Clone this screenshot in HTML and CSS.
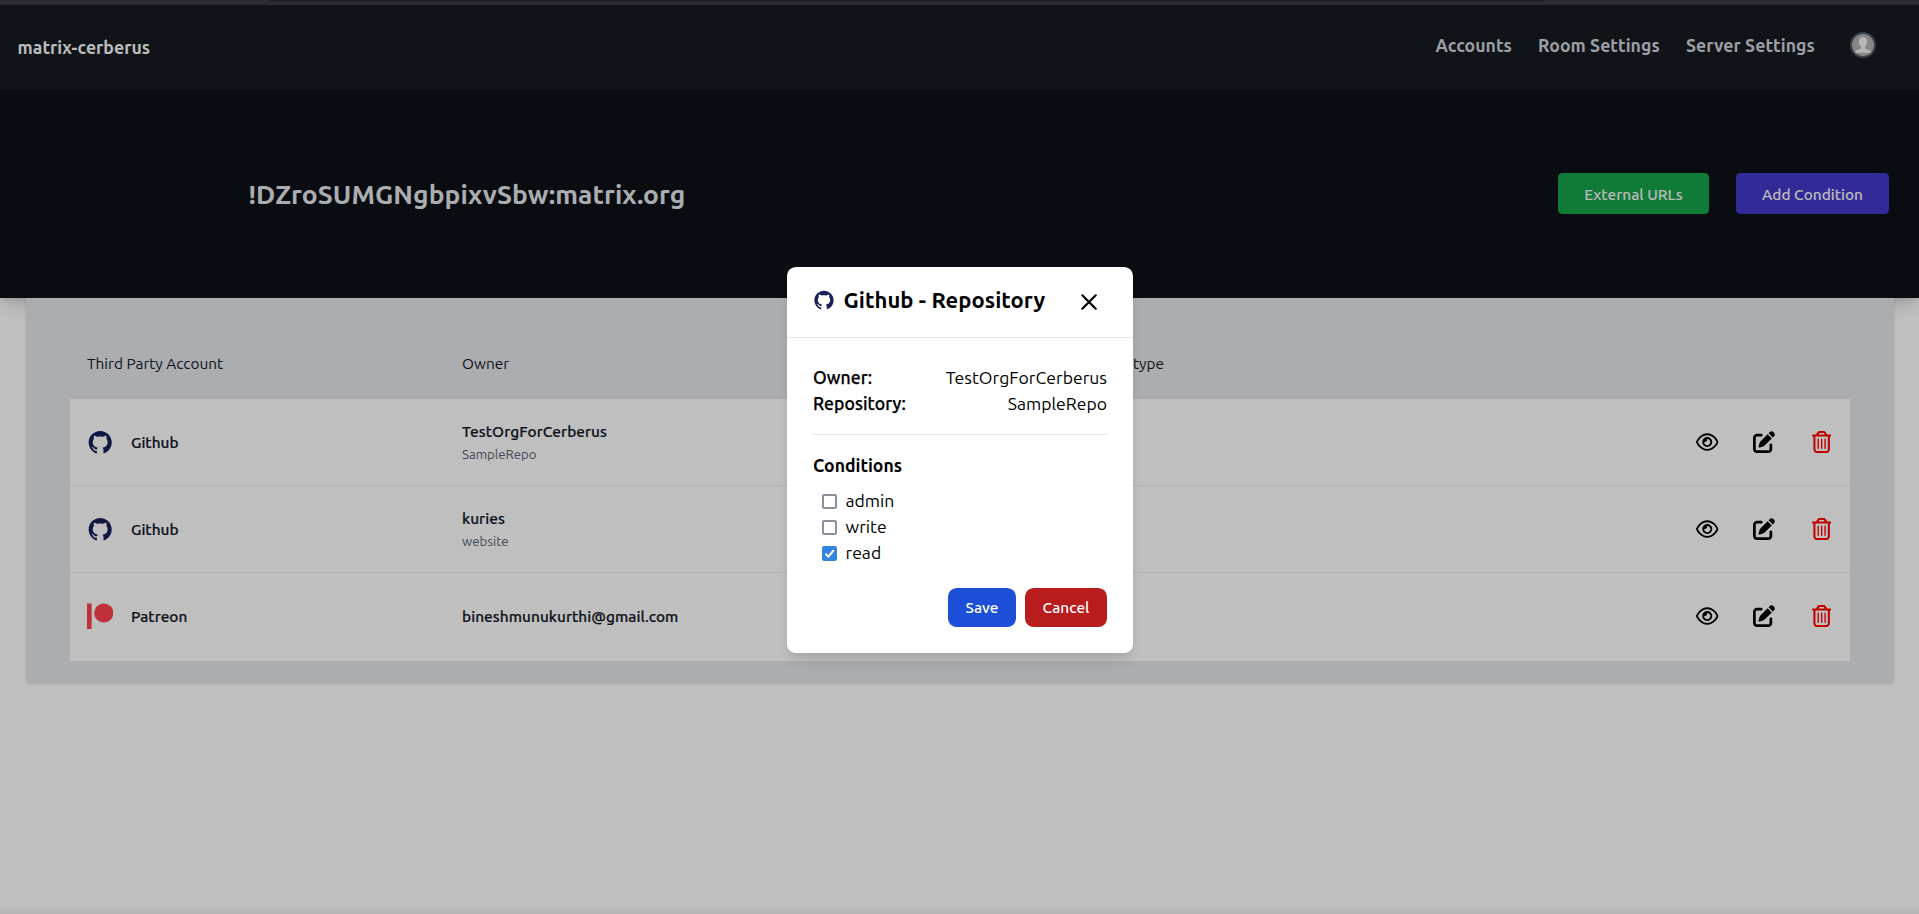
FILE: index.html
```html
<!DOCTYPE html>
<html lang="en">
<head>
<meta charset="utf-8">
<title>matrix-cerberus</title>
<link rel="stylesheet" href="styles.css">
</head>
<body>
<svg class="sprite" aria-hidden="true">
  <symbol id="github" viewBox="0 0 1024 1024"><path d="M511.6 76.3C264.3 76.2 64 276.4 64 523.5 64 718.9 189.3 885 363.8 946c23.5 5.9 19.9-10.8 19.9-22.2v-77.5c-135.7 15.9-141.2-73.9-150.3-88.9C215 726 171.5 718 184.5 703c30.9-15.9 62.4 4 98.9 57.9 26.4 39.1 77.9 32.5 104 26 5.7-23.5 17.9-44.5 34.7-60.8-140.6-25.2-199.2-111-199.2-213 0-49.5 16.3-95 48.3-131.7-20.4-60.5 1.9-112.3 4.9-120 58.1-5.2 118.5 41.6 123.2 45.3 33-8.9 70.7-13.6 112.9-13.6 42.4 0 80.2 4.9 113.5 13.9 11.3-8.6 67.3-48.8 121.3-43.9 2.9 7.7 24.7 58.3 5.5 118 32.4 36.8 48.9 82.7 48.9 132.3 0 102.2-59 188.1-200 212.9a127.5 127.5 0 0138.1 91v112.5c.8 9 0 17.9 15 17.9 177.1-59.7 304.6-227 304.6-424.1 0-247.2-200.4-447.3-447.5-447.3z"/></symbol>
  <symbol id="patreon" viewBox="0 0 512 512"><path d="M0 8h90v496H0z"/><circle cx="326" cy="194" r="186"/></symbol>
  <symbol id="eye" viewBox="0 0 576 512"><path d="M288 80c-65.2 0-118.8 29.6-159.9 67.7C89.6 183.5 63 226 49.4 256c13.6 30 40.2 72.5 78.6 108.3C169.2 402.4 222.8 432 288 432s118.8-29.6 159.9-67.7C486.4 328.5 513 286 526.6 256c-13.6-30-40.2-72.5-78.6-108.3C406.8 109.6 353.2 80 288 80zM95.4 112.6C142.5 68.8 207.2 32 288 32s145.5 36.8 192.6 80.6c46.8 43.5 78.1 95.4 93 131.1c3.3 7.9 3.3 16.7 0 24.6c-14.9 35.7-46.2 87.7-93 131.1C433.5 443.2 368.8 480 288 480s-145.5-36.8-192.6-80.6C48.6 356 17.3 304 2.5 268.3c-3.3-7.9-3.3-16.7 0-24.6C17.3 208 48.6 156 95.4 112.6zM288 336c44.2 0 80-35.8 80-80s-35.8-80-80-80c-.7 0-1.3 0-2 0c1.3 5.1 2 10.5 2 16c0 35.3-28.7 64-64 64c-5.5 0-10.9-.7-16-2c0 .7 0 1.3 0 2c0 44.2 35.8 80 80 80zm0-208a128 128 0 1 1 0 256 128 128 0 1 1 0-256z"/></symbol>
  <symbol id="edit" viewBox="0 0 512 512"><path d="M471.6 21.7c-21.9-21.9-57.3-21.9-79.2 0L362.3 51.7l97.9 97.9 30.1-30.1c21.9-21.9 21.9-57.3 0-79.2L471.6 21.7zm-299.2 220c-6.1 6.1-10.8 13.6-13.5 21.9l-29.6 88.8c-2.9 8.6-.6 18.1 5.8 24.6s15.9 8.7 24.6 5.8l88.8-29.6c8.2-2.7 15.7-7.4 21.9-13.5L437.7 172.3 339.7 74.3 172.4 241.7zM96 64C43 64 0 107 0 160V416c0 53 43 96 96 96H352c53 0 96-43 96-96V320c0-17.7-14.3-32-32-32s-32 14.3-32 32v96c0 17.7-14.3 32-32 32H96c-17.7 0-32-14.3-32-32V160c0-17.7 14.3-32 32-32h96c17.7 0 32-14.3 32-32s-14.3-32-32-32H96z"/></symbol>
  <symbol id="trash" viewBox="0 0 448 512"><path d="M170.5 51.6L151.5 80h145l-19-28.4c-1.5-2.2-4-3.6-6.7-3.6H177.1c-2.7 0-5.2 1.3-6.7 3.6zm147-26.6L354.2 80H368h48 8c13.3 0 24 10.7 24 24s-10.7 24-24 24h-8V432c0 44.2-35.8 80-80 80H112c-44.2 0-80-35.8-80-80V128H24c-13.3 0-24-10.7-24-24S10.7 80 24 80h8H80 93.8l36.7-55.1C140.9 9.4 158.4 0 177.1 0h93.7c18.7 0 36.2 9.4 46.6 24.9zM80 128V432c0 17.7 14.3 32 32 32H336c17.7 0 32-14.3 32-32V128H80zm80 64V400c0 8.8-7.2 16-16 16s-16-7.2-16-16V192c0-8.8 7.2-16 16-16s16 7.2 16 16zm80 0V400c0 8.8-7.2 16-16 16s-16-7.2-16-16V192c0-8.8 7.2-16 16-16s16 7.2 16 16zm80 0V400c0 8.8-7.2 16-16 16s-16-7.2-16-16V192c0-8.8 7.2-16 16-16s16 7.2 16 16z"/></symbol>
</svg>

<div class="chrome"><div class="chrome-field"></div></div>

<nav class="nav">
  <span class="brand">matrix-cerberus</span>
  <div class="links">
    <span class="link link-accounts">Accounts</span>
    <span class="link link-room">Room Settings</span>
    <span class="link link-server">Server Settings</span>
    <svg class="avatar" viewBox="0 0 26 26"><circle cx="13" cy="13" r="12" fill="#b3b3b3" stroke="#4b5563" stroke-width="2"/><path d="M13 5c2.500 0 4.100 1.700 4.100 4.300 0 2.300-.9 4.400-2.100 5.400v1.500c.3 1.300 5.600 1.200 6.200 4.500H4.800c.6-3.300 5.900-3.200 6.200-4.500v-1.500c-1.200-1-2.100-3.100-2.100-5.400C8.900 6.700 10.500 5 13 5z" fill="#f3f3f3"/></svg>
  </div>
</nav>

<header class="hero">
  <h1 class="room">!DZroSUMGNgbpixvSbw:matrix.org</h1>
  <div class="hero-actions">
    <button class="btn btn-green">External URLs</button>
    <button class="btn btn-indigo">Add Condition</button>
  </div>
</header>

<main class="card">
  <div class="row head">
    <span>Third Party Account</span><span>Owner</span><span>type</span>
  </div>
  <div class="body">
    <div class="row item">
      <div class="account"><svg class="logo navy"><use href="#github"/></svg><span class="provider">Github</span></div>
      <div class="owner"><span class="name">TestOrgForCerberus</span><span class="sub">SampleRepo</span></div>
      <div></div>
      <div class="actions"><svg class="eye"><use href="#eye"/></svg><svg class="edit"><use href="#edit"/></svg><svg class="trash"><use href="#trash"/></svg></div>
    </div>
    <div class="row item">
      <div class="account"><svg class="logo navy"><use href="#github"/></svg><span class="provider">Github</span></div>
      <div class="owner"><span class="name">kuries</span><span class="sub">website</span></div>
      <div></div>
      <div class="actions"><svg class="eye"><use href="#eye"/></svg><svg class="edit"><use href="#edit"/></svg><svg class="trash"><use href="#trash"/></svg></div>
    </div>
    <div class="row item">
      <div class="account"><svg class="logo coral"><use href="#patreon"/></svg><span class="provider">Patreon</span></div>
      <div class="owner"><span class="name">bineshmunukurthi@gmail.com</span></div>
      <div></div>
      <div class="actions"><svg class="eye"><use href="#eye"/></svg><svg class="edit"><use href="#edit"/></svg><svg class="trash"><use href="#trash"/></svg></div>
    </div>
  </div>
</main>

<div class="overlay">
  <section class="modal">
    <div class="modal-head">
      <svg class="modal-logo navy"><use href="#github"/></svg>
      <h2 class="modal-title">Github - Repository</h2>
      <svg class="close" viewBox="0 0 16 16"><path d="M1.300 1.300l13.400 13.400M14.700 1.300L1.300 14.700"/></svg>
    </div>
    <div class="modal-body">
      <div class="pair"><span class="key">Owner:</span><span>TestOrgForCerberus</span></div>
      <div class="pair"><span class="key">Repository:</span><span>SampleRepo</span></div>
      <hr class="rule">
      <h3 class="cond">Conditions</h3>
      <div class="check"><span class="box"></span><span>admin</span></div>
      <div class="check"><span class="box"></span><span>write</span></div>
      <div class="check"><svg class="ticked" viewBox="0 0 15 15"><rect width="15" height="15" rx="2" fill="#3584e4"/><path d="M3.500 7.800l2.800 2.900 5.500-6.600" fill="none" stroke="#fff" stroke-width="2"/></svg><span>read</span></div>
      <div class="modal-actions">
        <button class="mbtn save">Save</button>
        <button class="mbtn cancel">Cancel</button>
      </div>
    </div>
  </section>
</div>
</body>
</html>
```
FILE: styles.css
```css
* { box-sizing: border-box; margin: 0; padding: 0; }
body { width: 1919px; height: 914px; overflow: hidden; background: linear-gradient(transparent calc(100% - 9px), rgba(0,0,0,.05)) #fff; font-family: Ubuntu, "Noto Sans", "Open Sans", sans-serif; font-size: 17.6px; color: #000; }
svg { display: block; flex: none; fill: currentColor; }
span, h1, h2, h3, button { white-space: nowrap; }
button { border: 0; font-family: inherit; }
.sprite { position: absolute; width: 0; height: 0; }

.chrome { height: 5px; background: #2c2a33; }
.chrome-field { width: 1274px; height: 1px; margin-left: 269px; background: #1f1e25; }

.nav { height: 84px; display: flex; justify-content: space-between; align-items: center; padding: 0 43px 0 17.6px; background: #161b22; }
.brand { font-weight: 700; letter-spacing: .05px; color: #f9fafb; padding-top: 1px; }
.links { display: flex; align-items: center; padding-bottom: 4px; color: #d1d5db; }
.link { font-weight: 700; letter-spacing: .07px; }
.link-accounts { width: 102.500px; }
.link-room { width: 148px; }
.link-server { width: 164px; }
.avatar { width: 26px; height: 26px; }

.hero { height: 209px; display: flex; justify-content: space-between; align-items: flex-start; padding: 84px 30px 0 248.5px; background: #0d1117; box-shadow: 0 10px 15px -3px rgba(0,0,0,.15), 0 4px 6px -2px rgba(0,0,0,.08); }
.room { font-size: 26.4px; line-height: 42px; font-weight: 700; letter-spacing: .08px; color: #e5e7eb; }
.hero-actions { display: flex; gap: 27px; }
.btn { height: 41px; padding-top: 1px; border-radius: 4.4px; font-size: 15.4px; font-weight: 500; color: #f9fafb; }
.btn-green { width: 151px; background: #16a34a; }
.btn-indigo { width: 153px; background: #4338ca; }

.card { width: 1868px; height: 384.500px; margin-left: 26px; padding: 0 44px; background: #e5e7eb; border-radius: 0 0 4.4px 4.4px; box-shadow: 0 1px 3px rgba(0,0,0,.1), 0 1px 2px rgba(0,0,0,.06); }
.row { display: grid; grid-template-columns: 375px 671px 1fr auto; padding: 0 17px; }
.head { height: 100px; padding-top: 55px; font-size: 15.4px; line-height: 22px; color: #111827; }
.body { background: #fff; }
.item { height: 87px; align-items: center; border-top: 1px solid #eee; }
.item:first-child { border-top-color: #e2e4ea; }
.item:last-child { height: 88.500px; padding-bottom: 1.500px; }
.account { display: flex; align-items: center; gap: 17.6px; }
.logo { width: 26.4px; height: 26.4px; }
.navy { color: #191f57; }
.coral { color: #ff424d; }
.provider, .name { font-size: 15.4px; line-height: 23px; font-weight: 500; color: #111827; -webkit-text-stroke: .2px #111827; }
.provider { padding-top: 1px; }
.name { letter-spacing: .05px; }
.owner { display: flex; flex-direction: column; }
.sub { font-size: 13.2px; line-height: 22px; color: #596170; }
.actions { display: flex; align-items: center; padding-right: 2px; }
.eye { width: 22.5px; height: 20px; margin-right: 34.7px; }
.edit { width: 22px; height: 22px; margin-right: 36.5px; }
.trash { width: 19.25px; height: 22px; color: #f00; }

.overlay { position: absolute; inset: 5px 0 0; display: flex; align-items: center; justify-content: center; padding-left: 1px; background: rgba(0,0,0,.25); }
.modal { width: 346px; height: 386px; background: #fff; border-radius: 8.8px; box-shadow: 0 10px 15px -3px rgba(0,0,0,.1), 0 4px 6px -2px rgba(0,0,0,.05); }
.modal-head { height: 71px; display: flex; align-items: flex-start; padding: 22px 0 0 26px; border-bottom: 1px solid #e2e8f0; }
.modal-logo { width: 22px; height: 22px; }
.modal-title { width: 246px; padding-left: 8.5px; font-size: 22px; line-height: 22px; font-weight: 700; letter-spacing: .06px; }
.close { width: 16px; height: 16px; margin-top: 5px; fill: none; stroke: #000; stroke-width: 2.2px; stroke-linecap: round; }
.modal-body { padding: 26px; }
.pair { height: 26.4px; display: flex; justify-content: space-between; line-height: 28px; }
.key { font-weight: 500; letter-spacing: .06px; -webkit-text-stroke: .25px #000; }
.rule { margin: 18.2px 0 17px; border: 0; border-top: 1px solid #e2e8f0; }
.cond { font-size: 17.6px; line-height: 28px; font-weight: 700; padding-bottom: 8px; }
.check { height: 26px; display: flex; align-items: center; gap: 8.5px; padding-left: 9px; line-height: 24px; }
.box { width: 15px; height: 15px; border: 2px solid #8f8f9d; border-radius: 2px; }
.ticked { width: 15px; height: 15px; }
.modal-actions { display: flex; justify-content: flex-end; gap: 9px; padding-top: 22px; }
.mbtn { height: 39px; border-radius: 8.8px; font-size: 15.4px; font-weight: 500; color: #fff; }
.save { width: 68px; background: #1d4ed8; }
.cancel { width: 82px; background: #b91c1c; }
```
